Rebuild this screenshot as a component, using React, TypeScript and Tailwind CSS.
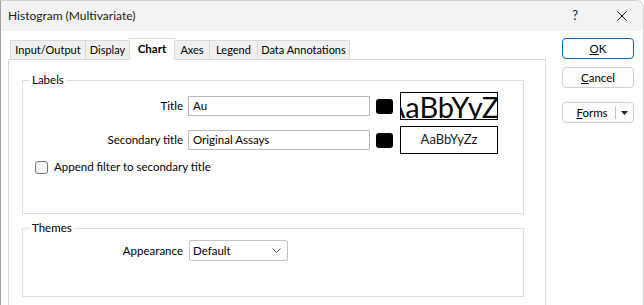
import React from "react";

const tabs = [
    {label: "Input/Output", w: "w-[75px]", cls: "border-l border-t"},
    {label: "Display", w: "w-[44px]", cls: "border-l border-t"},
    {label: "Chart", w: "w-[46px]", cls: "border-l border-t border-r", active: true},
    {label: "Axes", w: "w-[34px]", cls: "border-t"},
    {label: "Legend", w: "w-[48px]", cls: "border-l border-t"},
    {label: "Data Annotations", w: "w-[93px]", cls: "border-l border-t border-r"},
];

function TitleBar() {
    return (
        <div className="h-[30px] shrink-0 bg-[#f3f3f3] flex items-center pl-[7px]">
            <span className="text-[12px] text-[#1a1a1a]">Histogram (Multivariate)</span>
            <span className="ml-auto text-[13px] text-[#1a1a1a]">?</span>
            <svg className="ml-[39px] mr-[16px]" width="10" height="10" viewBox="0 0 10 10">
                <path d="M0.5 0.5 L9.5 9.5 M9.5 0.5 L0.5 9.5" stroke="#1a1a1a" strokeWidth="1"/>
            </svg>
        </div>
    );
}

function TabStrip() {
    return (
        <div className="flex items-end h-[21px] pl-[2px]">
            {tabs.map((t) =>
                t.active ? (
                    <div key={t.label}
                         className={`${t.w} ${t.cls} h-[22px] -mb-px relative z-10 bg-white border-[#d9d9d9] flex items-center justify-center whitespace-nowrap font-bold text-[11.5px] pb-[2px]`}>
                        {t.label}
                    </div>
                ) : (
                    <div key={t.label}
                         className={`${t.w} ${t.cls} h-[19px] bg-[#f0f0f0] border-[#d9d9d9] flex items-center justify-center whitespace-nowrap text-[11px]`}>
                        {t.label}
                    </div>
                )
            )}
        </div>
    );
}

function FontRow({label, value, big}: { label: string; value: string; big?: boolean }) {
    return (
        <div className="flex items-center h-[28px]">
            <div className="w-[160px] text-right">{label}</div>
            <div className="ml-[5px] w-[182px] h-[20px] border border-[#b9b9b9] bg-white flex items-center pl-[4px]">
                {value}
            </div>
            <div className="ml-[6px] w-[17px] h-[15px] rounded-[3px] bg-black"/>
            <div className="ml-[7px] w-[98px] h-[28px] border border-black bg-white flex items-center justify-center overflow-hidden">
                {big ? (
                    <span className="whitespace-nowrap text-[29px] leading-none text-[#0a0a0a]">AaBbYyZz</span>
                ) : (
                    <span className="whitespace-nowrap text-[13px] text-[#1a1a1a]">AaBbYyZz</span>
                )}
            </div>
        </div>
    );
}

function Buttons() {
    return (
        <div className="ml-[16px] pt-[7px] flex flex-col w-[72px]">
            <button className="h-[21px] rounded-[4px] border border-[#0067c0] bg-white text-[11.5px]">
                <span className="underline">O</span>K
            </button>
            <button className="mt-[8px] h-[21px] rounded-[4px] border border-[#d0d0d0] bg-[#fdfdfd] text-[11.5px]">
                <span className="underline">C</span>ancel
            </button>
            <button className="mt-[14px] h-[21px] rounded-[4px] border border-[#d0d0d0] bg-[#fdfdfd] text-[11.5px] flex items-center">
                <span className="flex-1 text-center pl-[6px]"><span className="underline">F</span>orms</span>
                <span className="w-px h-[13px] bg-[#c4c4c4]"/>
                <span className="w-[17px] flex justify-center">
                    <svg width="7" height="4" viewBox="0 0 7 4"><path d="M0 0 H7 L3.5 4 Z" fill="#222"/></svg>
                </span>
            </button>
        </div>
    );
}

export default function App() {
    return (
        <div className="w-[644px] h-[305px] overflow-hidden bg-white [font-family:Lato,sans-serif] text-[11.5px] text-black">
            <div className="h-full flex flex-col border-l border-l-[#a0a0a0] border-t border-t-[#d0d0d0] border-r border-r-[#d0d0d0] rounded-tr-[8px] overflow-hidden">
                <TitleBar/>
                <div className="flex-1 flex bg-white">
                    <div className="pl-[7px] pt-[7px] flex flex-col">
                        <TabStrip/>
                        <div className="w-[538px] h-[260px] border border-[#d9d9d9] bg-white pl-[13px]">
                            <fieldset className="mt-[12px] w-[502px] h-[142px] border border-[#dcdcdc]">
                                <legend className="ml-[6px] px-[3px] leading-[16px]">Labels</legend>
                                <div className="pt-[4px]">
                                    <FontRow label="Title" value="Au" big/>
                                    <div className="mt-[6px]">
                                        <FontRow label="Secondary title" value="Original Assays"/>
                                    </div>
                                    <label className="mt-[6px] flex items-center h-[14px] ml-[12px]">
                                        <span className="w-[13px] h-[13px] rounded-[3px] border border-[#767676] bg-[#f7f7f7]"/>
                                        <span className="ml-[6px]">Append filter to secondary title</span>
                                    </label>
                                </div>
                            </fieldset>
                            <fieldset className="mt-[6px] w-[502px] h-[77px] border border-[#dcdcdc]">
                                <legend className="ml-[6px] px-[3px] leading-[16px]">Themes</legend>
                                <div className="pt-[4px] flex items-center">
                                    <div className="w-[160px] text-right">Appearance</div>
                                    <div className="ml-[6px] w-[99px] h-[21px] border border-[#c2c2c2] rounded-[2px] bg-white flex items-center pl-[3px]">
                                        <span>Default</span>
                                        <svg className="ml-auto mr-[6px]" width="9" height="5" viewBox="0 0 9 5">
                                            <path d="M0.5 0.5 L4.5 4.5 L8.5 0.5" stroke="#555" fill="none" strokeWidth="1"/>
                                        </svg>
                                    </div>
                                </div>
                            </fieldset>
                        </div>
                    </div>
                    <Buttons/>
                </div>
            </div>
        </div>
    );
}
